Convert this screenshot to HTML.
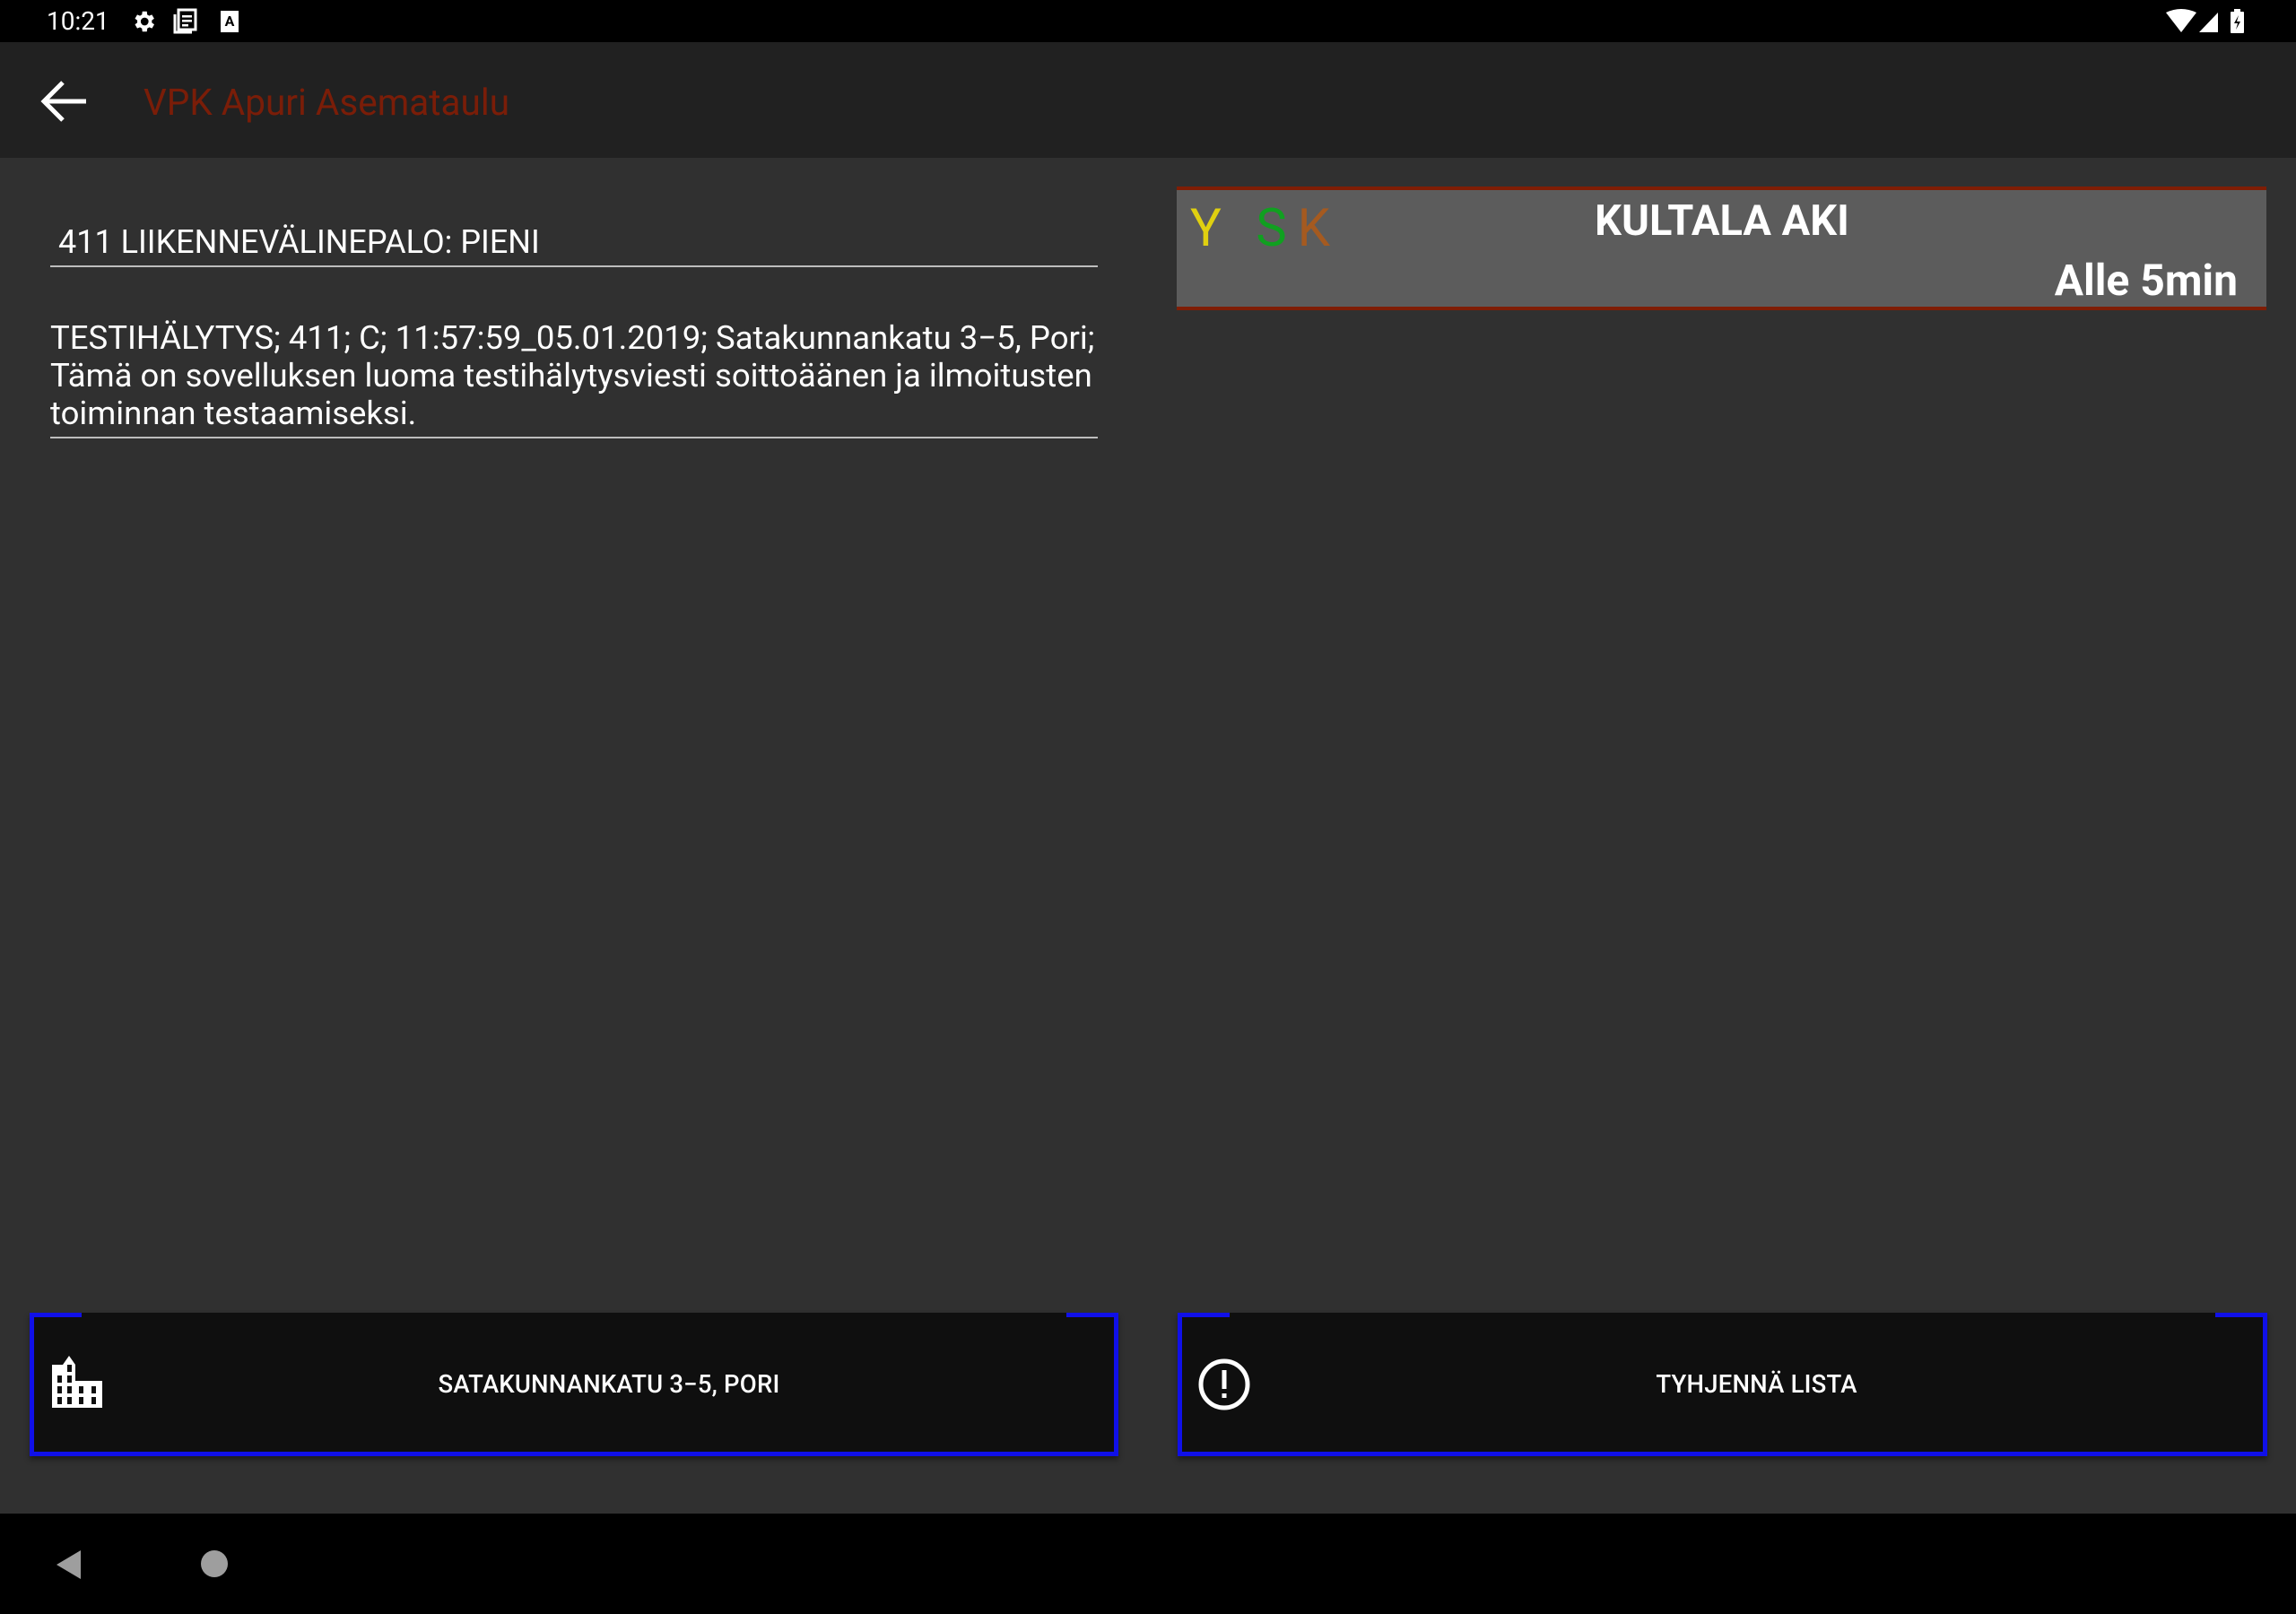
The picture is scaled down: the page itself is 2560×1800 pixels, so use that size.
<!DOCTYPE html>
<html><head><meta charset="utf-8"><style>
*{margin:0;padding:0;box-sizing:border-box}
body{width:2560px;height:1800px;background:#303030;font-family:"Roboto","Liberation Sans",sans-serif;position:relative;overflow:hidden;color:#fff}
.abs{position:absolute}
#status{left:0;top:0;width:2560px;height:47px;background:#000}
#bar{left:0;top:47px;width:2560px;height:129px;background:#212121}
#nav{left:0;top:1688px;width:2560px;height:112px;background:#000}
.line{height:2px;background:#bdbdbd}
.btn{background:#0f0f0f;border:5px solid #1010e8;border-top:none;box-shadow:0 4px 6px rgba(0,0,0,.4)}
.btn .tl,.btn .tr{position:absolute;top:0;height:5px;width:58px;background:#1010e8}
.btn .tl{left:-5px}.btn .tr{right:-5px}
.btn .lbl{position:absolute;left:0;right:0;top:0;bottom:0;display:flex;align-items:center;justify-content:center;font-size:27.5px;font-weight:500;letter-spacing:0.2px}
</style></head><body>
<div id="status" class="abs"></div>
<div class="abs" style="left:52px;top:7px;font-size:28px;">10:21</div>
<svg class="abs" style="left:145px;top:9px" width="30" height="30" viewBox="0 0 24 24"><path fill="#fff" d="M19.4 13a7.5 7.5 0 0 0 0-2l2.1-1.6-2-3.5-2.5 1a7 7 0 0 0-1.7-1L15 3h-4l-.4 2.9a7 7 0 0 0-1.7 1l-2.5-1-2 3.5L6.5 11a7.5 7.5 0 0 0 0 2l-2.1 1.6 2 3.5 2.5-1a7 7 0 0 0 1.7 1L11 21h4l.4-2.9a7 7 0 0 0 1.7-1l2.5 1 2-3.5zM13 15.5A3.5 3.5 0 1 1 13 8.5a3.5 3.5 0 0 1 0 7z"/></svg>
<svg class="abs" style="left:193px;top:9px" width="28" height="30" viewBox="0 0 28 30"><rect x="6" y="2" width="19" height="22" fill="none" stroke="#fff" stroke-width="3"/><path d="M2 7v20h19" fill="none" stroke="#fff" stroke-width="3"/><rect x="10" y="8" width="11" height="2.5" fill="#fff"/><rect x="10" y="13" width="11" height="2.5" fill="#fff"/><rect x="10" y="18" width="7" height="2.5" fill="#fff"/></svg>
<div class="abs" style="left:246px;top:12px;width:20px;height:24px;background:#fff;color:#000;font-size:16px;font-weight:bold;text-align:center;line-height:24px">A</div>
<svg class="abs" style="left:2415px;top:10px" width="110" height="28" viewBox="0 0 110 28"><path d="M0 4Q17 -4 34 4L17 26z" fill="#fff"/><path d="M37 26L58 4V26z" fill="#fff"/><rect x="72" y="3" width="15" height="24" rx="1" fill="#fff"/><rect x="76" y="0" width="7" height="4" fill="#fff"/><path d="M81 7l-5 9h4l-2 7 5-9h-4z" fill="#000"/></svg>
<div id="bar" class="abs"></div>
<svg class="abs" style="left:44px;top:88px" width="54" height="50" viewBox="0 0 54 50"><path d="M52 25H6M26 4L5 25l21 21" fill="none" stroke="#fff" stroke-width="5"/></svg>
<div class="abs" style="left:160px;top:90px;font-size:40.5px;color:#7a1d08">VPK Apuri Asemataulu</div>

<div class="abs" style="left:65px;top:249px;font-size:36px">411 LIIKENNEVÄLINEPALO: PIENI</div>
<div class="abs line" style="left:56px;top:296px;width:1168px"></div>
<div class="abs" style="left:56px;top:356px;width:1200px;font-size:36.5px;line-height:42px">TESTIHÄLYTYS; 411; C; 11:57:59_05.01.2019; Satakunnankatu 3−5, Pori;<br>Tämä on sovelluksen luoma testihälytysviesti soittoäänen ja ilmoitusten<br>toiminnan testaamiseksi.</div>
<div class="abs line" style="left:56px;top:487px;width:1168px"></div>

<div class="abs" style="left:1312px;top:208px;width:1215px;height:138px;background:#5c5c5c;border-top:4px solid #7f1d05;border-bottom:4px solid #7f1d05"></div>
<div class="abs" style="left:1327px;top:221px;font-size:58px;letter-spacing:12px"><span style="color:#e0d010">Y</span> <span style="color:#10a020">S</span><span style="color:#a55a20">K</span></div>
<div class="abs" style="left:1600px;width:640px;text-align:center;top:219px;font-size:47px;font-weight:bold">KULTALA AKI</div>
<div class="abs" style="right:65px;top:284px;font-size:48px;font-weight:bold">Alle 5min</div>

<div class="abs btn" style="left:33px;top:1464px;width:1214px;height:160px"><div class="tl"></div><div class="tr"></div>
<svg class="abs" style="left:20px;top:48px" width="56" height="58" viewBox="0 0 56 58"><path d="M19 0l7 10v18h30v30H0V10h12z" fill="#fff"/><g fill="#0f0f0f"><rect x="17" y="10" width="5" height="8"/><rect x="6" y="22" width="5" height="8"/><rect x="17" y="22" width="5" height="8"/><rect x="6" y="34" width="5" height="8"/><rect x="17" y="34" width="5" height="8"/><rect x="30" y="34" width="5" height="8"/><rect x="44" y="34" width="5" height="8"/><rect x="6" y="46" width="5" height="8"/><rect x="17" y="46" width="5" height="8"/><rect x="30" y="46" width="5" height="8"/><rect x="44" y="46" width="5" height="8"/></g></svg>
<div class="lbl" style="padding-left:78px;padding-top:4px">SATAKUNNANKATU 3−5, PORI</div></div>

<div class="abs btn" style="left:1313px;top:1464px;width:1215px;height:160px"><div class="tl"></div><div class="tr"></div>
<svg class="abs" style="left:17px;top:50px" width="60" height="60" viewBox="0 0 60 60"><circle cx="30" cy="30" r="26" fill="none" stroke="#fff" stroke-width="5"/><rect x="27.5" y="14" width="5" height="21" fill="#fff"/><rect x="27.5" y="40" width="5" height="5" fill="#fff"/></svg>
<div class="lbl" style="padding-left:76px;padding-top:4px">TYHJENNÄ LISTA</div></div>

<div id="nav" class="abs"></div>
<svg class="abs" style="left:62px;top:1728px" width="30" height="34" viewBox="0 0 30 34"><path d="M28 1L1 17l27 16z" fill="#9e9e9e"/></svg>
<div class="abs" style="left:224px;top:1729px;width:30px;height:30px;border-radius:50%;background:#9e9e9e"></div>
</body></html>
